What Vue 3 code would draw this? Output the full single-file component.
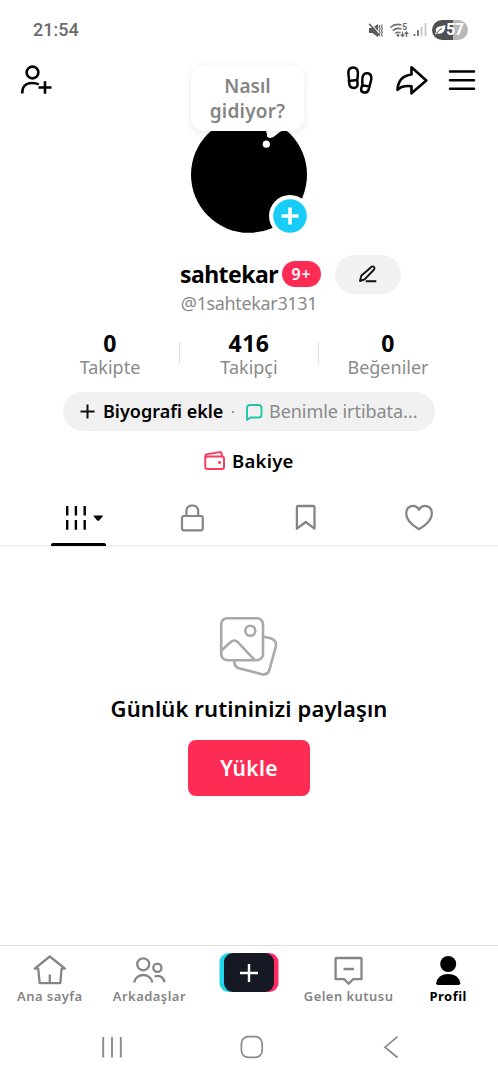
<script setup>
const stats = [
  { value: '0', label: 'Takipte' },
  { value: '416', label: 'Takipçi' },
  { value: '0', label: 'Beğeniler' },
]
</script>

<template>
  <div class="screen">
    <div class="status">
      <span class="clock">21:54</span>
      <div class="status-icons">
        <svg class="mute" width="18" height="18" viewBox="367 20 18 18">
          <path d="M369 27h3.500l5.500-4v13.200l-5.500-4.200h-3.500z" fill="#5c5c5c" />
          <path d="M370.300 22l9 10.300" stroke="#fff" stroke-width="1.100" />
          <path d="M369.200 22.800l10.300 12" stroke="#5c5c5c" stroke-width="1.600" />
          <path d="M380 24l-.8 1.500.8 2-.8 2 .8 2-.8 2 .8 1.500M382.300 23.500l-.8 2 .8 2-.8 2 .8 2-.8 2 .8 2" fill="none" stroke="#707070" stroke-width="1.200" />
        </svg>
        <svg class="wifi" width="22" height="18" viewBox="389 20 22 18">
          <g fill="none" stroke="#707070" stroke-width="1.600">
            <path d="M390.300 26.500q5-4.500 11-2.500M392.800 29.600q4-3.500 8.700-1.600M395.200 32.400q2.800-2 5.300-.6" />
            <path d="M402.500 30.500v5M400.700 33.500l1.800 2 1.800-2M406.500 36v-5M404.700 33l1.800-2 1.800 2" stroke-width="1.300" />
          </g>
          <circle cx="398" cy="34.400" r="1.300" fill="#666" />
          <text x="402.300" y="29" class="wifi-band">5</text>
        </svg>
        <svg class="signal" width="14" height="14" viewBox="413 23 14 14">
          <path d="M414.500 34v2M418 30v6" stroke="#666" stroke-width="1.700" />
          <path d="M421.500 27v9M425.500 23v13" stroke="#c4c4c4" stroke-width="1.700" />
        </svg>
        <div class="battery">
          <svg width="11" height="10" viewBox="0 0 11 10">
            <path d="M1 7Q0 2 4.500 1.500L10.500 0Q10 8.500 5 8.700 3.500 8.800 2.500 8.200L1 9.500 0 8.800z" fill="#fff" />
            <path d="M1.500 8.500Q4 4.500 7 3.500" fill="none" stroke="#555" stroke-width="1" />
          </svg>
          <span>57</span>
        </div>
      </div>
    </div>

    <header class="header">
      <div class="header-left">
        <svg width="34" height="34" viewBox="19 63 34 34" fill="none" stroke="#000" stroke-width="2.600">
          <circle cx="32.500" cy="72.500" r="5.900" />
          <path d="M22.300 93.500v-1C22.300 86.500 26.300 83 32 83q4 0 6.800 1.400" />
          <path d="M38.500 87.500h13M45 81.200v12.600" />
        </svg>
      </div>
      <div class="avatar-box">
        <svg class="avatar" width="116" height="168" viewBox="191 65 116 168">
          <circle cx="249" cy="174.800" r="58" fill="#000" />
          <path d="M264 129Q267 130.500 267 136.500Q268.500 138.800 272 137.500C277 135.500 278 131.500 284 130.500V128z" fill="#fff" />
          <circle cx="266.300" cy="144.200" r="3.600" fill="#fff" />
        </svg>
        <div class="bubble">
          <span class="bubble-a">Nasıl</span>
          <span class="bubble-b">gidiyor?</span>
        </div>
        <svg class="add" width="42" height="42" viewBox="0 0 42 42">
          <circle cx="21" cy="21" r="21" fill="#fff" />
          <circle cx="21" cy="21" r="16.800" fill="#17cdf7" />
          <path d="M12.500 21h17M21 12.500v17" stroke="#fff" stroke-width="3.600" />
        </svg>
      </div>
      <div class="header-right">
        <svg width="28" height="30" viewBox="346 65 28 30" fill="none" stroke="#000" stroke-width="2.500" stroke-linejoin="round">
          <path d="M348.900 80.700C349.600 76.500 346.900 73.500 349 69.700C350.800 66.700 355.500 66.700 357.200 69.700C359.300 73.500 357 77 357.300 80.300L357.600 84C358 88.900 350.300 89.200 349.500 84.800zM348.900 80.900L357.300 80.100" />
          <path d="M362.400 85C362.700 81 361.200 78.300 363.400 75C365.500 72 370.200 73 371.200 76.500C372.200 80 370 82.500 369.600 86.200L368.500 90C366.800 94.300 360.300 92.800 361.200 88.400zM362.100 85L369.500 86.600" />
        </svg>
        <svg width="34" height="32" viewBox="395 64 34 32" fill="none" stroke="#000" stroke-width="2.600" stroke-linejoin="round">
          <path d="M411.500 67.200L426.300 80.500L411.500 93.300V86.300C405.500 85.500 401 86.500 397.500 89.800C398 80 403 75.500 411.500 74.500z" />
        </svg>
        <svg width="28" height="22" viewBox="448 69 28 22">
          <path d="M450 71.500h24M450 80.200h24M450 88.700h24" stroke="#000" stroke-width="2.500" stroke-linecap="round" />
        </svg>
      </div>
    </header>

    <div class="name-row">
      <span class="name">sahtekar</span>
      <span class="badge">9+</span>
      <div class="edit">
        <svg width="20" height="20" viewBox="358 264 20 20" fill="none" stroke="#111" stroke-width="1.900" stroke-linejoin="round">
          <path d="M360 281l1.300-5.200 10.300-9.100q1.700-.8 2.500.3 1 1.300 0 2.500l-9.500 9.800z" />
          <path d="M366.500 281.300h9" stroke-linecap="round" />
        </svg>
      </div>
    </div>
    <div class="handle">@1sahtekar3131</div>

    <div class="stats">
      <div v-for="(s, i) in stats" :key="i" class="stat">
        <strong>{{ s.value }}</strong>
        <span>{{ s.label }}</span>
      </div>
    </div>

    <div class="bio">
      <svg width="15" height="15" viewBox="0 0 15 15"><path d="M.5 7.500h14M7.500 .5v14" stroke="#111" stroke-width="2" /></svg>
      <span class="bio-add">Biyografi ekle</span>
      <span class="dot"></span>
      <svg class="chat" width="18" height="18" viewBox="245 402 18 18" fill="none" stroke="#22c5a5" stroke-width="1.900" stroke-linejoin="round">
        <path d="M247 419V407q0-3 3-3h8.500q3 0 3 3v6.500q0 3-3 3h-8z" />
      </svg>
      <span class="bio-hint">Benimle irtibata...</span>
    </div>

    <div class="balance">
      <svg width="22" height="20" viewBox="204 451 22 20" fill="none" stroke="#f93a5c" stroke-width="1.900" stroke-linejoin="round">
        <rect x="205.300" y="456.500" width="18.700" height="12.500" rx="2" />
        <path d="M205.300 458.500v-2q0-2 2-2.400l12.500-2q1.500-.2 1.800 1.200l.5 3" />
        <circle cx="219.500" cy="462.500" r=".6" fill="#f93a5c" />
      </svg>
      <span>Bakiye</span>
    </div>

    <div class="tabs">
      <div class="tab tab-active">
        <svg width="42" height="28" viewBox="63 504 42 28">
          <path d="M67.200 506v9.500M75.900 506v9.500M84.700 506v9.500M67.200 520v9.800M75.900 520v9.800M84.700 520v9.800" stroke="#000" stroke-width="2.400" />
          <path d="M94 515.500h8.500q.7 0 .3.700l-3.600 4.200q-1 .9-2 0l-3.600-4.200q-.3-.7.400-.7z" fill="#000" />
        </svg>
      </div>
      <div class="tab">
        <svg width="28" height="30" viewBox="178 503 28 30" fill="none" stroke="#858585" stroke-width="2.200">
          <rect x="182" y="516" width="20.800" height="14.300" rx="2" />
          <path d="M186.400 516v-4.500q0-6 5.900-6t5.900 6v4.500" />
        </svg>
      </div>
      <div class="tab">
        <svg width="24" height="30" viewBox="294 503 24 30" fill="none" stroke="#858585" stroke-width="2.300" stroke-linejoin="round">
          <path d="M298.300 506h14.900q1.300 0 1.300 1.300v21.400l-8.800-6.700-8.800 6.700v-21.400q0-1.300 1.400-1.300z" />
        </svg>
      </div>
      <div class="tab">
        <svg width="32" height="30" viewBox="403 503 32 30" fill="none" stroke="#858585" stroke-width="2.300" stroke-linejoin="round">
          <path d="M419 529.200C413 525.800 406.200 520.500 406.200 513.600C406.200 505 415.700 503.600 419 509.800C422.300 503.600 431.900 505 431.900 513.600C431.900 520.500 425 525.800 419 529.200z" />
        </svg>
      </div>
    </div>

    <main class="empty">
      <svg width="60" height="62" viewBox="219 615 60 62" fill="none" stroke="#a9a9a9" stroke-width="2.600">
        <rect x="221.200" y="618.200" width="41.800" height="42" rx="6" />
        <circle cx="250.300" cy="630.800" r="5" />
        <path d="M221.500 650.500L231 641.800Q234.500 639 237.800 642.200L254.300 659.700" />
        <path d="M263.800 636.800L270.500 638.300Q277 640.500 275.800 646.500L269.500 669.500Q267.500 675.500 261.800 674.200L239 668.300Q233.800 666.500 234.500 660.500" />
      </svg>
      <h2>Günlük rutininizi paylaşın</h2>
      <button class="upload">Yükle</button>
    </main>

    <nav class="nav">
      <div class="nav-item">
        <svg width="36" height="32" viewBox="32 954 36 32" fill="none" stroke="#858585" stroke-width="2.300" stroke-linejoin="round">
          <path d="M34.700 968.600L49.800 956.500L65 968.600H61.600L60.300 983.200H39.700L38.200 968.600z" /><path d="M49.800 974.500v8.700" />
        </svg>
        <span>Ana sayfa</span>
      </div>
      <div class="nav-item">
        <svg width="36" height="32" viewBox="131.500 954 36 32" fill="none" stroke="#858585" stroke-width="2.300">
          <circle cx="143.700" cy="964.300" r="6" /><circle cx="157.900" cy="967.800" r="4.100" />
          <path d="M134.700 982.500C136.500 972.500 151 972.500 152.900 982.500M155 976.500C160 974.700 164 977 165 982.300" />
        </svg>
        <span>Arkadaşlar</span>
      </div>
      <div class="nav-item create">
        <div class="create-btn">
          <svg width="20" height="20" viewBox="0 0 20 20"><path d="M1 10h18M10 1v18" stroke="#fff" stroke-width="2.400" /></svg>
        </div>
      </div>
      <div class="nav-item">
        <svg width="36" height="32" viewBox="331 954 36 32" fill="none" stroke="#858585" stroke-width="2.300" stroke-linejoin="round">
          <path d="M336.300 958h24.500q.7 0 .7.700v20.500h-8.500l-4.400 4.500-4.300-4.500h-8.700v-20.500q0-.7.700-.7zM343.500 969h10.500" />
        </svg>
        <span>Gelen kutusu</span>
      </div>
      <div class="nav-item active">
        <svg width="36" height="32" viewBox="430 954 36 32">
          <circle cx="448.200" cy="964" r="8" /><path d="M436.200 983.300C437.500 970.800 459 970.800 460.300 983.300Q460.300 985 458.500 985H438Q436.200 985 436.200 983.300z" />
        </svg>
        <span>Profil</span>
      </div>
    </nav>

    <div class="sysnav">
      <svg width="24" height="24" viewBox="0 0 24 24"><path d="M3.200 2v20.500M12 2v20.500M20.800 2v20.500" stroke="#8a8a8a" stroke-width="1.900" /></svg>
      <svg width="24" height="24" viewBox="0 0 24 24"><rect x="1.400" y="1.700" width="20.800" height="20.600" rx="6.800" fill="none" stroke="#8a8a8a" stroke-width="1.700" /></svg>
      <svg width="24" height="24" viewBox="0 0 24 24"><path d="M18.500 1.700L6 12.200L18.500 22.500" fill="none" stroke="#8a8a8a" stroke-width="1.700" /></svg>
    </div>
  </div>
</template>

<style>
body { margin: 0; background: #fff; }
</style>

<style scoped>
.screen { width: 498px; height: 1080px; display: flex; flex-direction: column; background: #fff; color: #000; font-family: "Noto Sans", "Liberation Sans", sans-serif; overflow: hidden; white-space: nowrap; }
.screen > * { flex-shrink: 0; box-sizing: border-box; }
svg { display: block; flex-shrink: 0; }
.status { height: 58px; padding: 1px 30px 0 33px; display: flex; align-items: center; justify-content: space-between; }
.clock { font: 500 18px/20px Roboto, sans-serif; color: #6b6b6b; letter-spacing: 0; }
.status-icons { display: flex; align-items: center; }
.wifi { margin-left: 4px; }
.signal { margin-left: 2px; }
.wifi-band { font: 700 8.500px Roboto, sans-serif; fill: #666; }
.battery { width: 36px; height: 20px; margin-left: 5px; border-radius: 10px; background: linear-gradient(90deg, #505050 57%, #b8b8b8 57%); display: flex; align-items: center; padding-left: 3px; box-sizing: border-box; }
.battery span { color: #fff; font: 700 16px/20px Roboto, sans-serif; letter-spacing: -.5px; }
.header { height: 197px; display: grid; grid-template-columns: 1fr 116px 1fr; }
.header-left { padding: 5px 0 0 19px; }
.avatar-box { position: relative; padding-top: 7px; }
.bubble { position: absolute; left: 0; top: 7px; width: 113px; height: 66px; padding-top: 2px; box-sizing: border-box; border-radius: 14px; background: #fff; box-shadow: 0 2px 8px rgba(0,0,0,.09); display: flex; flex-direction: column; align-items: center; justify-content: center; color: #858585; font-weight: 600; font-size: 19px; line-height: 25px; }
.bubble-b { letter-spacing: .25px; }
.add { position: absolute; left: 78px; top: 136.500px; }
.header-right { display: flex; align-items: center; height: 44px; padding-left: 39px; }
.header-right svg + svg { margin-left: 21px; }
.header-right svg + svg + svg { margin-left: 19px; }
.name-row { height: 38px; display: flex; align-items: center; padding-left: 180px; }
.name { width: 98px; font-size: 23px; font-weight: 700; line-height: 36px; letter-spacing: -.55px; }
.badge { width: 39px; height: 26px; margin-left: 4px; border-radius: 13px; background: #fe2c55; color: #fff; font-size: 16px; line-height: 26px; font-weight: 600; text-align: center; letter-spacing: .8px; }
.edit { width: 66px; height: 39px; margin-left: 14px; border-radius: 20px; background: #f1f1f1; display: flex; align-items: center; justify-content: center; }
.handle { height: 38px; font-size: 18px; line-height: 20px; color: #8a8a8a; text-align: center; letter-spacing: -.35px; }
.stats { height: 61px; width: 417px; margin-left: 40.500px; display: grid; grid-template-columns: repeat(3, 1fr); text-align: center; }
.stat { position: relative; display: flex; flex-direction: column; }
.stat strong { font-size: 23px; line-height: 25px; letter-spacing: .5px; }
.stat span { font-size: 18px; line-height: 22px; color: #8a8a8a; }
.stat + .stat::before { content: ""; position: absolute; left: -1px; top: 11px; width: 1px; height: 22px; background: #ddd; }
.bio { width: 372px; height: 39px; margin-left: 63px; border-radius: 20px; background: #f1f1f1; display: flex; align-items: center; padding-left: 17px; font-size: 18px; line-height: 24px; }
.bio span:not(.dot) { padding-bottom: 1px; }
.bio-add { width: 120px; margin-left: 8px; font-weight: 600; }
.dot { width: 2px; height: 2px; border-radius: 1px; background: #777; margin-left: 9px; }
.chat { margin-left: 10.500px; }
.bio-hint { margin-left: 6.500px; color: #8a8a8a; letter-spacing: -.05px; }
.balance { height: 60px; display: flex; align-items: center; padding-left: 204px; gap: 6px; font-size: 18.500px; font-weight: 600; letter-spacing: .25px; }
.balance span { padding-bottom: 2px; }
.tabs { height: 56px; border-bottom: 2px solid #f0f0f0; display: grid; grid-template-columns: repeat(4, 113.500px); padding-left: 22px; }
.tab { position: relative; display: flex; align-items: center; justify-content: center; }
.tab-active { padding-left: 9.500px; }
.tab-active::after { content: ""; position: absolute; left: 29.400px; bottom: -1px; width: 55px; height: 3px; border-radius: 2px 2px 0 0; background: #000; }
.empty { height: 398px; padding-top: 68px; display: flex; flex-direction: column; align-items: center; }
h2 { margin: 15px 0 0; font-size: 22px; line-height: 32px; font-weight: 600; letter-spacing: .12px; }
.upload { width: 122px; height: 56px; margin-top: 16px; border: 0; border-radius: 8px; background: #fe2c55; color: #fff; font: 600 21px "Noto Sans", sans-serif; letter-spacing: .3px; }
.nav { height: 70px; border-top: 1px solid #e2e2e2; display: grid; grid-template-columns: repeat(5, 1fr); }
.nav-item { display: flex; flex-direction: column; align-items: center; padding-top: 8px; color: #858585; font-size: 13px; line-height: 20px; font-weight: 600; letter-spacing: .45px; }
.active { color: #000; font-weight: 700; }
.create-btn { width: 50px; height: 39px; border-radius: 9px; background: #161823; box-shadow: -4.500px 0 #20d5ec, 4.500px 0 #fe2c66; display: flex; align-items: center; justify-content: center; }
.create { padding-top: 7px; padding-left: 1px; }
.sysnav { height: 65px; display: grid; grid-template-columns: repeat(3, 24px); column-gap: 115.500px; padding: 20px 0 0 100px; }
</style>
